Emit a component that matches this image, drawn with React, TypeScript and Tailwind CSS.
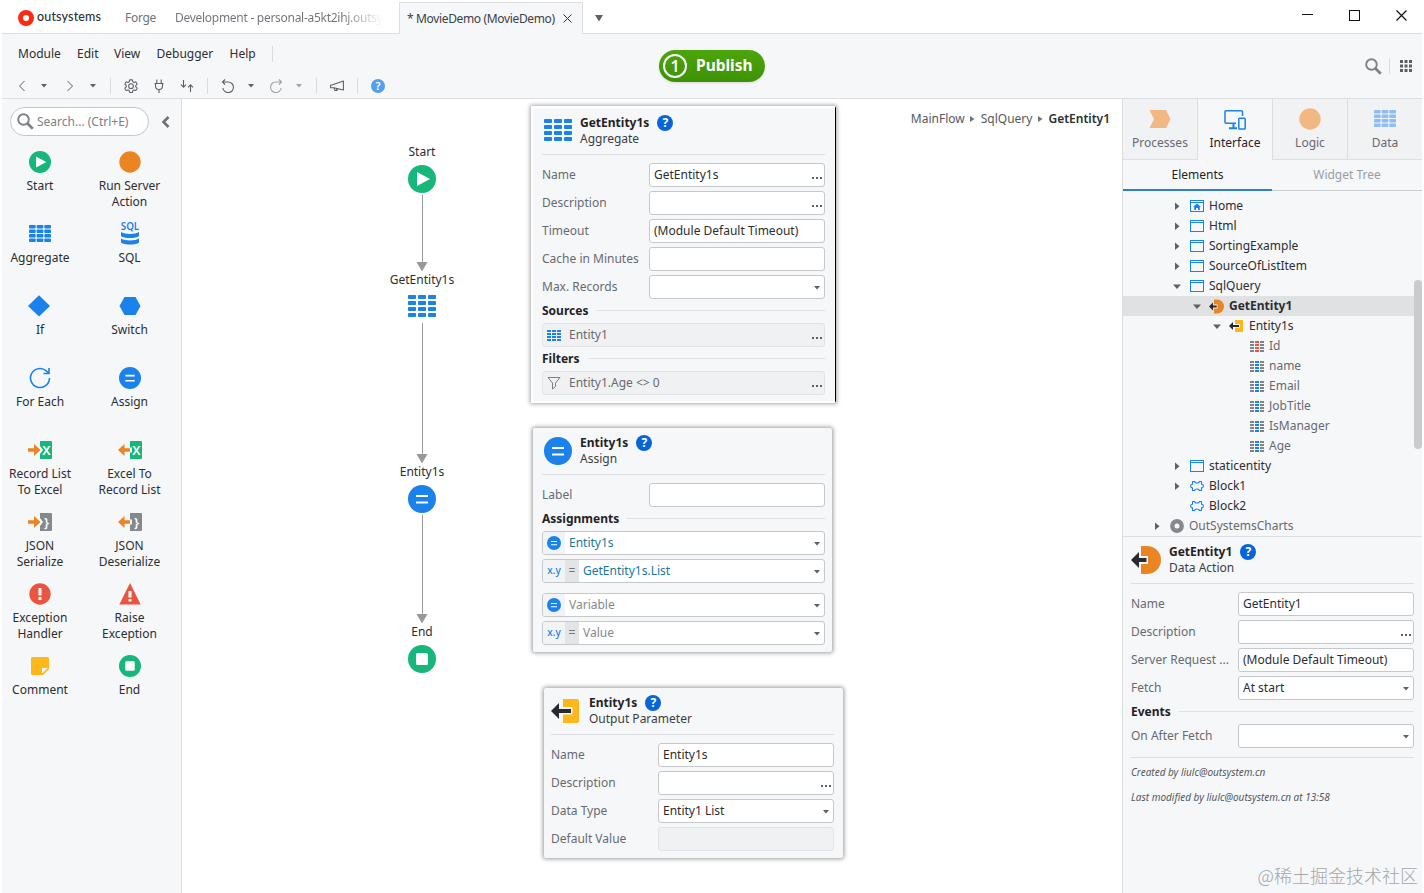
import React from 'react';
import { clsx } from 'clsx';

type IconProps = { className?: string };

const TableIcon = ({ className, color = '#1a82e8', mid, cols = 3, rows = 4, w = 28, h = 22 }: IconProps & {
  color?: string;
  mid?: string;
  cols?: number;
  rows?: number;
  w?: number;
  h?: number;
}) => {
  const gap = w > 24 ? 2 : 1;
  const cw = (w - gap * (cols - 1)) / cols;
  const ch = (h - gap * (rows - 1)) / rows;
  return (
    <svg width={w} height={h} viewBox={`0 0 ${w} ${h}`} className={className}>
      {Array.from({ length: cols * rows }, (_, i) => {
        const c = i % cols;
        const r = Math.floor(i / cols);
        return (
          <rect
            key={i}
            x={c * (cw + gap)}
            y={r * (ch + gap)}
            width={cw}
            height={ch}
            rx={w > 20 ? 0.8 : 0}
            fill={mid && c === 1 ? mid : color}
          />
        );
      })}
    </svg>
  );
};

const StartIcon = ({ size = 22 }: { size?: number }) => (
  <svg width={size} height={size} viewBox="0 0 28 28">
    <circle cx="14" cy="14" r="14" fill="#17b67a" />
    <path d="M9 7v14l13-7z" fill="#fff" />
  </svg>
);

const EndIcon = ({ size = 22 }: { size?: number }) => (
  <svg width={size} height={size} viewBox="0 0 28 28">
    <circle cx="14" cy="14" r="14" fill="#17b67a" />
    <rect x="8" y="8" width="12" height="12" rx="1.500" fill="#fff" />
  </svg>
);

const AssignIcon = ({ size = 22 }: { size?: number }) => (
  <svg width={size} height={size} viewBox="0 0 28 28">
    <circle cx="14" cy="14" r="14" fill="#1a82ea" />
    <path d="M8 11h12M8 17.5h12" stroke="#fff" strokeWidth="2" />
  </svg>
);

const OutputIcon = ({ size = 28 }: { size?: number }) => (
  <svg width={size} height={size} viewBox="0 0 28 28">
    <path d="M12 2h14a2 2 0 0 1 2 2v20a2 2 0 0 1-2 2H12z" fill="#fdb71a" />
    <path d="M10 10h11.500v7.500H10z" fill="#f6f7f9" />
    <path d="M0 14l8-8v6h12v4H8v6z" fill="#272b30" />
  </svg>
);

const DataActionIcon = ({ size = 30 }: { size?: number }) => (
  <svg width={size} height={size} viewBox="0 0 30 30">
    <path d="M10 1h6a14 14 0 0 1 0 28h-6z" fill="#e98523" />
    <path d="M9 11h8v8H9z" fill="#f6f7f9" />
    <path d="M0 15l8-8v6h7.500v4H8v6z" fill="#272b30" />
  </svg>
);

const HelpBadge = () => (
  <span className="flex size-4 items-center justify-center rounded-full bg-[#0765d9] text-xs leading-4 font-bold text-white">?</span>
);

const Caret = ({ className }: IconProps) => (
  <svg width="6" height="4" viewBox="0 0 6 4" className={clsx('shrink-0', className)}>
    <path d="M0 0h6L3 3.500z" fill="currentColor" />
  </svg>
);

const SearchIcon = () => (
  <svg width="17" height="17" viewBox="0 0 17 17" fill="none" stroke="#7f8489" className="shrink-0">
    <circle cx="6.500" cy="6.500" r="5.300" strokeWidth="1.900" />
    <path d="M10.500 10.500l5.300 5.300" strokeWidth="2.800" />
  </svg>
);

const Separator = ({ className }: IconProps) => <div className={clsx('w-px bg-[#d9dbde]', className)} />;

function TitleBar() {
  return (
    <div className="flex h-[34px] shrink-0 items-end bg-white">
      <div className="flex h-[34px] w-[397px] items-center border-b border-[#dcdee1] pl-4 text-[#6f7378]">
        <svg width="16" height="16" viewBox="0 0 16 16" className="mt-0.5">
          <circle cx="8" cy="8" r="5.500" fill="none" stroke="#fb2b13" strokeWidth="5" />
        </svg>
        <span className="ml-[3px] w-16 pt-0.5 font-['Lato'] text-[12.500px] font-medium tracking-[0.15px] text-[#2d3135]">outsystems</span>
        <span className="ml-6 w-[30px] pt-[3px] tracking-[-0.3px]">Forge</span>
        <span className="ml-5 bg-linear-to-r from-[#6f7378] from-80% to-transparent bg-clip-text pt-[3px] tracking-[-0.28px] whitespace-nowrap text-transparent">
          Development - personal-a5kt2ihj.outsy
        </span>
      </div>
      <div className="flex h-8 w-[184px] items-center border-x border-t border-[#dcdee1] bg-[#f6f7f9] pl-[7px] tracking-[-0.35px] text-[#3c4045]">
        * MovieDemo (MovieDemo)
        <svg width="9" height="9" viewBox="0 0 9 9" className="ml-2 shrink-0" stroke="#333">
          <path d="M0.500 0.500l8 8M8.500 0.500l-8 8" />
        </svg>
      </div>
      <div className="flex h-[34px] flex-1 items-center border-b border-[#dcdee1] pl-3">
        <svg width="8" height="7" viewBox="0 0 8 7" className="mt-1">
          <path d="M0 0h8L4 6.500z" fill="#5e6267" />
        </svg>
        <div className="mb-0.5 ml-auto flex items-center pr-[15px]">
          <svg width="11" height="11" viewBox="0 0 11 11" stroke="#111">
            <path d="M0 4.500h11" />
          </svg>
          <svg width="11" height="11" viewBox="0 0 11 11" stroke="#111" fill="none" className="ml-9">
            <rect x="0.500" y="0.500" width="10" height="10" />
          </svg>
          <svg width="11" height="11" viewBox="0 0 11 11" stroke="#111" strokeWidth="1.200" className="ml-9">
            <path d="M0.500 0.500l10 10M10.500 0.500l-10 10" />
          </svg>
        </div>
      </div>
    </div>
  );
}

function Toolbar() {
  return (
    <div className="flex h-[65px] shrink-0 items-center border-b border-[#dcdee1] bg-[#f6f7f9]">
      <div className="h-full w-[657px]">
        <div className="flex h-[39px] items-center pl-4 text-[#2a2e33]">
          <span className="w-[59px]">Module</span>
          <span className="w-[37px]">Edit</span>
          <span className="w-[42.500px]">View</span>
          <span className="w-[73px]">Debugger</span>
          <span className="w-[42px]">Help</span>
          <Separator className="h-4" />
        </div>
        <div className="flex h-[26px] items-center text-[#5d6166]">
          <svg width="14" height="14" viewBox="0 0 14 14" fill="none" stroke="currentColor" className="ml-[13px]">
            <path d="M9.500 2L4.500 7l5 5" />
          </svg>
          <Caret className="ml-3" />
          <svg width="14" height="14" viewBox="0 0 14 14" fill="none" stroke="currentColor" className="ml-4">
            <path d="M4.500 2l5 5-5 5" />
          </svg>
          <Caret className="ml-[13px]" />
          <Separator className="ml-3.5 h-4" />
          <svg width="14" height="14" viewBox="0 0 24 24" fill="none" stroke="currentColor" strokeWidth="1.800" className="ml-[13px]">
            <path d="M9.700 1.500h4.600l.8 3.300 1.900 1.100 3.300-1 2.300 4-2.500 2.300v2.200l2.500 2.300-2.300 4-3.300-1-1.900 1.100-.8 3.300H9.700l-.8-3.300L7 18.700l-3.300 1-2.300-4 2.500-2.300v-2.200L1.400 8.900l2.300-4 3.300 1 1.900-1.100z" strokeLinejoin="round" />
            <circle cx="12" cy="12.300" r="4" />
          </svg>
          <svg width="14" height="14" viewBox="0 0 14 14" fill="none" stroke="currentColor" className="ml-3.5" strokeWidth="1.100">
            <path d="M4.800 0.500v3.500M9.200 0.500v3.500M2.500 4.500h9M3.500 4.500v2.500a3.500 3.500 0 0 0 7 0V4.500M7 10.500V14" />
          </svg>
          <svg width="14" height="14" viewBox="0 0 14 14" fill="none" stroke="currentColor" className="ml-3.5" strokeWidth="1.100">
            <path d="M3.500 1v7M1 5.700l2.500 2.500L6 5.700M10.500 13V6M8 8.300l2.500-2.500L13 8.300" />
          </svg>
          <Separator className="ml-[13px] h-4" />
          <svg width="14" height="14" viewBox="0 0 14 14" fill="none" stroke="currentColor" className="ml-[13px]" strokeWidth="1.100">
            <path d="M4 0.500L1.500 3 4 5.500M1.500 3h5.700a5.300 5.300 0 1 1-5.300 6" />
          </svg>
          <Caret className="ml-[13px]" />
          <svg width="14" height="14" viewBox="0 0 14 14" fill="none" stroke="#a1a4a8" className="ml-[15px]" strokeWidth="1.100">
            <path d="M10 0.500L12.500 3 10 5.500M12.500 3H6.800a5.300 5.300 0 1 0 5.300 6" />
          </svg>
          <Caret className="ml-[13px] text-[#a1a4a8]" />
          <Separator className="ml-3.5 h-4" />
          <svg width="14" height="14" viewBox="0 0 14 14" fill="none" stroke="currentColor" className="ml-[13px]" strokeWidth="1.100">
            <path d="M13.400 2v9L4 8.700H0.600V6H2zM4 8.700l1 2.800h2l-.7-2.200" strokeLinejoin="round" />
          </svg>
          <Separator className="ml-[13px] h-4" />
          <span className="ml-[13px] flex size-3.5 items-center justify-center rounded-full bg-[#539fee] text-[11px] leading-[14px] font-semibold text-white">?</span>
        </div>
      </div>
      <button className="flex h-8 w-[106px] items-center rounded-full bg-linear-to-b from-[#4ca50b] to-[#3e9204] pl-1 shadow-sm">
        <span className="flex size-6 items-center justify-center rounded-full border-2 border-white pb-px text-base font-semibold text-white">1</span>
        <span className="ml-[9px] pb-0.5 text-[15.500px] font-bold text-white">Publish</span>
      </button>
      <div className="ml-auto flex items-center pr-2.5">
        <SearchIcon />
        <Separator className="ml-[7px] h-4" />
        <svg width="12" height="12" viewBox="0 0 12 12" fill="#5b5f64" className="ml-2.5">
          {[0, 4.5, 9].map((y) => [0, 4.5, 9].map((x) => <rect key={`${x}-${y}`} x={x} y={y} width="3" height="3" />))}
        </svg>
      </div>
    </div>
  );
}

const ConvertIcon = ({ glyph, fill, reverse }: { glyph: string; fill: string; reverse?: boolean }) => (
  <svg width="24" height="18" viewBox="0 0 24 18">
    <path d="M12 0h11a1 1 0 0 1 1 1v16a1 1 0 0 1-1 1H12z" fill={fill} />
    {reverse ? (
      <>
        <path d="M12 6.500h2v5h-2z" fill="#f6f7f9" />
        <path d="M0 9l6.500-6v4.300H12v3.400H6.500V15z" fill="#e98523" />
      </>
    ) : (
      <>
        <path d="M12 5l3 4-3 4z" fill="#f6f7f9" />
        <path d="M12.500 9L6 3v4.300H0v3.400h6V15z" fill="#e98523" />
      </>
    )}
    <text x="18.500" y="13.500" textAnchor="middle" fontSize="13" fontWeight="600" fill="#fff">{glyph}</text>
  </svg>
);

const paletteItems: { label: string; icon: React.ReactNode }[] = [
  { label: 'Start', icon: <StartIcon /> },
  {
    label: 'Run Server Action',
    icon: (
      <svg width="22" height="22" viewBox="0 0 22 22">
        <circle cx="11" cy="11" r="10.700" fill="#e98523" />
      </svg>
    ),
  },
  { label: 'Aggregate', icon: <TableIcon w={22} h={17} className="mb-0.5" /> },
  {
    label: 'SQL',
    icon: (
      <svg width="20" height="24" viewBox="0 0 20 24" fill="#1a82e8" className="mb-0.5 shrink-0">
        <text x="10" y="9" textAnchor="middle" fontSize="9.800" fontWeight="600">SQL</text>
        <path d="M1 11c3 2.500 15 2.500 18 0v4c-3 2.700-15 2.700-18 0zM1 17.500c3 2.500 15 2.500 18 0v4c-3 2.700-15 2.700-18 0z" />
      </svg>
    ),
  },
  {
    label: 'If',
    icon: (
      <svg width="22" height="22" viewBox="0 0 22 22" className="-translate-x-px">
        <path d="M11 0.300L22 11 11 21.500 0 11z" fill="#1a82ea" />
      </svg>
    ),
  },
  {
    label: 'Switch',
    icon: (
      <svg width="22" height="18" viewBox="0 0 22 18">
        <path d="M5.500 0h11L21.500 9l-5 9h-11L0.500 9z" fill="#1a82ea" />
      </svg>
    ),
  },
  {
    label: 'For Each',
    icon: (
      <svg width="22" height="22" viewBox="0 0 22 22" fill="none" stroke="#1a82ea" strokeWidth="1.600">
        <path d="M20.500 11a9.500 9.500 0 1 1-3.300-7.200l2.300 2.400M20 1v5.500h-5.500" />
      </svg>
    ),
  },
  { label: 'Assign', icon: <AssignIcon /> },
  { label: 'Record List To Excel', icon: <ConvertIcon glyph="X" fill="#17b67a" /> },
  { label: 'Excel To Record List', icon: <ConvertIcon glyph="X" fill="#17b67a" reverse /> },
  { label: 'JSON Serialize', icon: <ConvertIcon glyph="}" fill="#85888c" /> },
  { label: 'JSON Deserialize', icon: <ConvertIcon glyph="}" fill="#85888c" reverse /> },
  {
    label: 'Exception Handler',
    icon: (
      <svg width="22" height="22" viewBox="0 0 22 22">
        <circle cx="11" cy="11" r="10.700" fill="#ea5541" />
        <path d="M9.500 5h3v7.500h-3zM9.500 14h3v3h-3z" fill="#fff" />
      </svg>
    ),
  },
  {
    label: 'Raise Exception',
    icon: (
      <svg width="22" height="22" viewBox="0 0 22 22">
        <path d="M11 0l10.700 21.500H0.300z" fill="#ea5541" />
        <path d="M9.500 8h3v6.500h-3zM9.500 16h3v2.500h-3z" fill="#fff" />
      </svg>
    ),
  },
  {
    label: 'Comment',
    icon: (
      <svg width="18" height="18" viewBox="0 0 18 18">
        <path d="M1.500 0h15A1.500 1.500 0 0 1 18 1.500V12l-6 6H1.500A1.500 1.500 0 0 1 0 16.500v-15A1.500 1.500 0 0 1 1.500 0z" fill="#fdb71a" />
        <path d="M11 16.500V11h5.500z" fill="#fff" />
      </svg>
    ),
  },
  { label: 'End', icon: <EndIcon /> },
];

function Palette() {
  return (
    <aside className="w-[180px] shrink-0 border-r border-[#dcdee1] bg-[#f6f7f9] pt-2">
      <div className="flex items-center pl-2">
        <div className="flex h-[29px] w-[139px] items-center rounded-full border border-[#c3c6ca] bg-white pl-1.5 text-[#7d8186]">
          <SearchIcon />
          <span className="ml-[3px] pt-px">Search... (Ctrl+E)</span>
        </div>
        <svg width="9" height="12" viewBox="0 0 9 12" fill="none" stroke="#6e7277" strokeWidth="2.600" className="ml-3">
          <path d="M7.500 1L2.500 6l5 5" />
        </svg>
      </div>
      <div className="mt-[15px] grid grid-cols-[76px_76px] gap-x-[13.500px]">
        {paletteItems.map((item) => (
          <div key={item.label} className="flex h-[72px] flex-col items-center">
            <div className="flex h-[22px] items-center justify-center">{item.icon}</div>
            <span className="mt-[5px] w-[68px] text-center text-[#2a2e33]">{item.label}</span>
          </div>
        ))}
      </div>
    </aside>
  );
}

const Connector = ({ className }: IconProps) => (
  <div className={clsx('mt-0.5 flex flex-col items-center', className)}>
    <div className="w-px flex-1 bg-[#999]" />
    <svg width="12" height="10" viewBox="0 0 12 10" className="shrink-0">
      <path d="M0.500 0h11L6 9.500z" fill="#999" />
    </svg>
  </div>
);

const FlowNode = ({ label, children }: { label: string; children: React.ReactNode }) => (
  <div className="flex flex-col items-center">
    <span className="text-[#2a2e33]">{label}</span>
    <div className="mt-[5px] flex h-7 items-center">{children}</div>
  </div>
);

const PanelHeader = ({ icon, title, kind }: { icon: React.ReactNode; title: string; kind: string }) => (
  <div className="flex h-[46px] pt-[7px]">
    <div className="flex h-8 w-[38px] items-center">{icon}</div>
    <div>
      <div className="flex items-center gap-2 font-bold text-[#1f2327]">
        {title}
        <HelpBadge />
      </div>
      <div className="text-[#3a3e43]">{kind}</div>
    </div>
  </div>
);

const Rule = () => <div className="mb-1.5 h-px bg-[#dcdee1]" />;

const Dots = ({ className }: IconProps) => (
  <svg width="10" height="2" viewBox="0 0 10 2" fill="#5d6166" className={clsx('ml-auto shrink-0', className)}>
    <rect width="2" height="2" />
    <rect x="4" width="2" height="2" />
    <rect x="8" width="2" height="2" />
  </svg>
);

interface FieldProps {
  label: string;
  value?: string;
  end?: 'dots' | 'caret';
  disabled?: boolean;
}

const Field = ({ label, value, end, disabled }: FieldProps) => (
  <div className="flex h-7 items-center">
    <span className="w-[107px] pb-px whitespace-nowrap text-[#666a70]">{label}</span>
    <div
      className={clsx(
        'flex h-6 w-44 items-center rounded-[3px] border pr-0.5 pb-px pl-1 text-[#2a2e33]',
        disabled ? 'border-[#e1e3e6] bg-[#f0f1f2]' : 'border-[#c6c9cc] bg-white'
      )}
    >
      {value}
      {end === 'dots' && <Dots className="mt-[7px]" />}
      {end === 'caret' && <Caret className="mt-[3px] mr-0.5 ml-auto text-[#5d6166]" />}
    </div>
  </div>
);

const Section = ({ title }: { title: string }) => (
  <div className="flex h-5 items-center gap-2">
    <span className="font-bold text-[#1f2327]">{title}</span>
    <div className="mb-px h-px flex-1 bg-[#dfe1e4]" />
  </div>
);

const SourceRow = ({ icon, text }: { icon: React.ReactNode; text: string }) => (
  <div className="flex h-7 items-center">
    <div className="flex h-6 w-full items-center rounded-[3px] border border-[#e1e3e6] bg-[#f0f1f2] pr-0.5 pl-1 text-[#666a70]">
      {icon}
      <span className="ml-2 pb-px">{text}</span>
      <Dots className="mt-[5px]" />
    </div>
  </div>
);

const VariableRow = ({ text, muted }: { text: string; muted?: boolean }) => (
  <div className="flex h-7 items-center">
    <div className="flex h-6 w-full items-center overflow-hidden rounded-[3px] border border-[#c6c9cc] bg-white pr-1">
      <span className="flex h-full w-[22px] items-center justify-center bg-[#f2f3f5]">
        <AssignIcon size={14} />
      </span>
      <span className={clsx('ml-1 pb-px', muted ? 'text-[#85898e]' : 'text-[#17789c]')}>{text}</span>
      <Caret className="mt-0.5 ml-auto text-[#5d6166]" />
    </div>
  </div>
);

const ValueRow = ({ text, muted }: { text: string; muted?: boolean }) => (
  <div className="flex h-7 items-center">
    <div className="flex h-6 w-full items-center overflow-hidden rounded-[3px] border border-[#c6c9cc] bg-white pr-1">
      <span className="flex h-full w-[22px] items-center justify-center bg-[#f2f3f5] text-[10px] font-medium text-[#1a82ea]">x.y</span>
      <span className="flex h-full w-3.5 items-center justify-center bg-[#e2e4e6] text-[#73777c]">=</span>
      <span className={clsx('ml-1 pb-px', muted ? 'text-[#85898e]' : 'text-[#17789c]')}>{text}</span>
      <Caret className="mt-0.5 ml-auto text-[#5d6166]" />
    </div>
  </div>
);

const FilterIcon = () => (
  <svg width="14" height="14" viewBox="0 0 14 14" fill="none" stroke="#7c8085">
    <path d="M1 1.500h12L8.500 7v3.500l-3 2.500V7z" strokeLinejoin="round" />
  </svg>
);

const Crumb = () => (
  <svg width="5" height="6" viewBox="0 0 5 6" className="mx-[5.500px]">
    <path d="M0 0l4.500 3L0 6z" fill="#6e7277" />
  </svg>
);

function Canvas() {
  return (
    <main className="relative flex-1 bg-white">
      <div className="flex items-center justify-end pt-3 pr-3 text-[#55595e]">
        <span>MainFlow</span>
        <Crumb />
        <span>SqlQuery</span>
        <Crumb />
        <span className="font-semibold text-[#2a2e33]">GetEntity1</span>
      </div>

      {/* flow */}
      <div className="absolute top-[45px] left-[200px] flex w-20 flex-col items-center">
        <FlowNode label="Start"><StartIcon size={28} /></FlowNode>
        <Connector className="h-[77px]" />
        <FlowNode label="GetEntity1s"><TableIcon w={28} h={22} className="mb-0.5" /></FlowNode>
        <Connector className="h-[141px]" />
        <FlowNode label="Entity1s"><AssignIcon size={28} /></FlowNode>
        <Connector className="h-[109px]" />
        <FlowNode label="End"><EndIcon size={28} /></FlowNode>
      </div>

      {/* property windows */}
      <div className="absolute top-[7px] left-[349px] w-[305px] border-2 border-r border-white border-r-black bg-[#f6f7f9] pr-2.5 pb-1 pl-[9px] shadow-[0_0_4px_1px_rgba(0,0,0,0.35)]">
        <PanelHeader icon={<TableIcon w={28} h={22} className="mb-0.5 ml-0.5" />} title="GetEntity1s" kind="Aggregate" />
        <Rule />
        <Field label="Name" value="GetEntity1s" end="dots" />
        <Field label="Description" end="dots" />
        <Field label="Timeout" value="(Module Default Timeout)" />
        <Field label="Cache in Minutes" />
        <Field label="Max. Records" end="caret" />
        <Section title="Sources" />
        <SourceRow icon={<TableIcon w={14} h={11} />} text="Entity1" />
        <Section title="Filters" />
        <SourceRow icon={<FilterIcon />} text="Entity1.Age <> 0" />
      </div>

      <div className="absolute top-[329px] left-[351px] w-[299px] rounded-[2px] bg-[#f6f7f9] pr-[7px] pb-[5px] pl-[9px] shadow-[0_0_4px_1px_rgba(0,0,0,0.4)]">
        <PanelHeader icon={<span className="ml-0.5"><AssignIcon size={28} /></span>} title="Entity1s" kind="Assign" />
        <Rule />
        <Field label="Label" />
        <Section title="Assignments" />
        <VariableRow text="Entity1s" />
        <ValueRow text="GetEntity1s.List" />
        <div className="mt-1.5">
          <VariableRow text="Variable" muted />
          <ValueRow text="Value" muted />
        </div>
      </div>

      <div className="absolute top-[589px] left-[362px] w-[299px] rounded-[2px] bg-[#f6f7f9] pr-[9px] pb-[5px] pl-[7px] shadow-[0_0_4px_1px_rgba(0,0,0,0.4)]">
        <PanelHeader icon={<OutputIcon />} title="Entity1s" kind="Output Parameter" />
        <Rule />
        <Field label="Name" value="Entity1s" />
        <Field label="Description" end="dots" />
        <Field label="Data Type" value="Entity1 List" end="caret" />
        <Field label="Default Value" disabled />
      </div>
    </main>
  );
}

const ScreenIcon = ({ home }: { home?: boolean }) => (
  <svg width="14" height="12" viewBox="0 0 14 12" fill="none" stroke="#1a82ea">
    <rect x="0.500" y="0.500" width="13" height="11" />
    <path d="M0.500 2.500h13" />
    {home && <path d="M7 3.500l4 3.500h-1.200v3H8V8H6v2H4.200V7H3z" fill="#1a82ea" stroke="none" />}
  </svg>
);

const BlockIcon = () => (
  <svg width="14" height="12" viewBox="0 0 14 12" fill="none" stroke="#1a82ea" strokeWidth="1.100">
    <path d="M2.500 1.500h2.200c0 2 4.600 2 4.600 0h2.200v2.800c2.400-.6 2.400 4 0 3.400v2.800H9.300c0-2-4.600-2-4.600 0H2.500V7.700c-2.400.6-2.400-4 0-3.400z" strokeLinejoin="round" />
  </svg>
);

const attrIcon = <TableIcon w={14} h={11} color="#7f8489" mid="#1a82ea" />;

interface TreeItem {
  label: string;
  depth: number;
  arrow?: 'right' | 'down';
  icon: React.ReactNode;
  selected?: boolean;
  dim?: boolean;
}

const treeItems: TreeItem[] = [
  { label: 'Home', depth: 1, arrow: 'right', icon: <ScreenIcon home /> },
  { label: 'Html', depth: 1, arrow: 'right', icon: <ScreenIcon /> },
  { label: 'SortingExample', depth: 1, arrow: 'right', icon: <ScreenIcon /> },
  { label: 'SourceOfListItem', depth: 1, arrow: 'right', icon: <ScreenIcon /> },
  { label: 'SqlQuery', depth: 1, arrow: 'down', icon: <ScreenIcon /> },
  { label: 'GetEntity1', depth: 2, arrow: 'down', icon: <span className="-ml-px"><DataActionIcon size={15} /></span>, selected: true },
  { label: 'Entity1s', depth: 3, arrow: 'down', icon: <span className="-ml-px"><OutputIcon size={14} /></span> },
  { label: 'Id', depth: 4, icon: <TableIcon w={14} h={11} color="#7f8489" mid="#ea5541" />, dim: true },
  { label: 'name', depth: 4, icon: attrIcon, dim: true },
  { label: 'Email', depth: 4, icon: attrIcon, dim: true },
  { label: 'JobTitle', depth: 4, icon: attrIcon, dim: true },
  { label: 'IsManager', depth: 4, icon: attrIcon, dim: true },
  { label: 'Age', depth: 4, icon: attrIcon, dim: true },
  { label: 'staticentity', depth: 1, arrow: 'right', icon: <ScreenIcon /> },
  { label: 'Block1', depth: 1, arrow: 'right', icon: <BlockIcon /> },
  { label: 'Block2', depth: 1, icon: <BlockIcon /> },
  {
    label: 'OutSystemsCharts',
    depth: 0,
    arrow: 'right',
    icon: (
      <svg width="14" height="14" viewBox="0 0 14 14">
        <circle cx="7" cy="7" r="4.700" fill="none" stroke="#85888c" strokeWidth="4.400" />
      </svg>
    ),
    dim: true,
  },
];

const TreeArrow = ({ dir }: { dir?: 'right' | 'down' }) => (
  <svg width="8" height="8" viewBox="0 0 8 8" fill="#5d6166">
    {dir === 'right' && <path d="M2 0.500l4.500 3.700L2 8z" />}
    {dir === 'down' && <path d="M0 2.500h8L4 7z" />}
  </svg>
);

const layerTabs = [
  {
    label: 'Processes',
    icon: (
      <svg width="22" height="18" viewBox="0 0 22 18">
        <path d="M0.500 0H17l4.500 9-4.500 9H0.500L5 9z" fill="#f1b884" />
      </svg>
    ),
  },
  {
    label: 'Interface',
    icon: (
      <svg width="22" height="20" viewBox="0 0 22 20" fill="none" stroke="#1a82ea" strokeWidth="1.500" className="mt-px">
        <path d="M12 13.200H2a1 1 0 0 1-1-1V1.800a1 1 0 0 1 1-1h15.500a1 1 0 0 1 1 1V6" />
        <path d="M9.500 13.500v4.500M5 18.300h8" strokeWidth="2" />
        <rect x="14.800" y="8.300" width="6.400" height="10.700" rx="0.800" />
      </svg>
    ),
  },
  {
    label: 'Logic',
    icon: (
      <svg width="22" height="22" viewBox="0 0 22 22">
        <circle cx="11" cy="11" r="10.700" fill="#f1b884" />
      </svg>
    ),
  },
  { label: 'Data', icon: <TableIcon w={22} h={17} color="#8dbdf2" className="mb-0.5" /> },
];

function SidePanel() {
  return (
    <aside className="flex w-[300px] shrink-0 flex-col border-l border-[#dcdee1] bg-[#f6f7f9]">
      <div className="flex h-[61px]">
        {layerTabs.map((tab) => {
          const active = tab.label === 'Interface';
          return (
            <div
              key={tab.label}
              className={clsx(
                'flex w-[75px] flex-col items-center border-r border-[#dcdee1] pt-[9px] last:w-[74px] last:border-r-0',
                active ? 'text-[#1f2327]' : 'border-b bg-[#f1f2f3] text-[#666a70]'
              )}
            >
              <div className="flex h-[22px] items-center">{tab.icon}</div>
              <span className="mt-[5px]">{tab.label}</span>
            </div>
          );
        })}
      </div>
      <div className="flex h-[31px]">
        <div className="flex w-[149px] items-center justify-center border-b-2 border-[#2a7fd0] text-[#1f2327]">Elements</div>
        <div className="flex flex-1 items-center justify-center border-b border-[#c9ccd0] text-[#999da2]">Widget Tree</div>
      </div>

      <div className="flex h-[346px] border-b border-[#dcdee1]">
        <div className="flex-1 pt-[5px]">
          {treeItems.map((item) => (
            <div
              key={item.label}
              className={clsx(
                'flex h-5 items-center',
                item.selected && 'bg-[#dfe1e3] font-bold',
                item.dim ? 'text-[#666a70]' : 'text-[#2a2e33]'
              )}
              style={{ paddingLeft: 30 + item.depth * 20 }}
            >
              <TreeArrow dir={item.arrow} />
              <span className="ml-[9px] flex w-[15px] items-center">{item.icon}</span>
              <span className="ml-1">{item.label}</span>
            </div>
          ))}
        </div>
        <div className="w-2 pt-[89px]">
          <div className="h-[169px] rounded-full bg-[#c9cbce]" />
        </div>
      </div>

      <div className="pr-2 pl-2">
        <PanelHeader icon={<DataActionIcon />} title="GetEntity1" kind="Data Action" />
        <Rule />
        <Field label="Name" value="GetEntity1" />
        <Field label="Description" end="dots" />
        <Field label="Server Request ..." value="(Module Default Timeout)" />
        <Field label="Fetch" value="At start" end="caret" />
        <Section title="Events" />
        <Field label="On After Fetch" end="caret" />
        <div className="mt-[7px] h-px bg-[#dcdee1]" />
        <p className="mt-1.5 text-[10px] leading-4 text-[#55595e] italic">Created by liulc@outsystem.cn</p>
        <p className="mt-[9px] text-[10px] leading-4 text-[#55595e] italic">Last modified by liulc@outsystem.cn at 13:58</p>
      </div>
      <div className="mt-auto pr-1 pb-1.5 text-right font-['Noto_Sans_CJK_SC',sans-serif] text-[18px] leading-6 font-light whitespace-nowrap text-[#a4a7ab]">
        @稀土掘金技术社区
      </div>
    </aside>
  );
}

export default function App() {
  return (
    <div className="flex h-[893px] w-[1424px] flex-col overflow-hidden bg-white px-0.5 font-['Noto_Sans',sans-serif] text-xs">
      <TitleBar />
      <Toolbar />
      <div className="flex min-h-0 flex-1">
        <Palette />
        <Canvas />
        <SidePanel />
      </div>
    </div>
  );
}
